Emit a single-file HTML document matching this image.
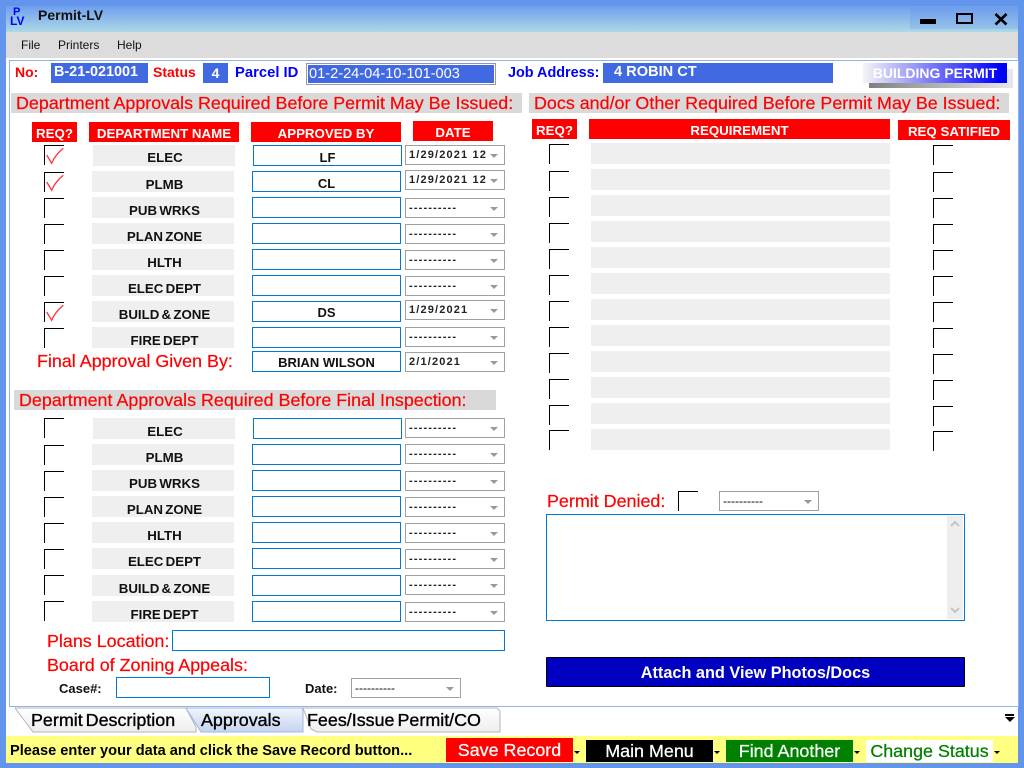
<!DOCTYPE html>
<html><head><meta charset="utf-8"><title>Permit-LV</title>
<style>
html,body{margin:0;padding:0;width:1024px;height:768px;overflow:hidden;background:#6495ed;font-family:"Liberation Sans",sans-serif}
div,svg{position:absolute;box-sizing:border-box}
.t{white-space:nowrap}
.h{background:#f00;color:#fff;font-weight:bold;font-size:13.3px;text-align:center;line-height:23px;height:20px;white-space:nowrap}
.s{background:#d9d9d9;color:#f00;font-size:17.9px;line-height:20px;height:20px;white-space:nowrap;-webkit-text-stroke:.2px #f00}
.c{width:20px;height:20px;border-top:1px solid #000;border-left:1px solid #000}
.l{width:142px;height:21px;background:#efefef;text-align:center;font-weight:bold;font-size:13.3px;word-spacing:-1.5px;line-height:27px;padding-left:3px;color:#111;white-space:nowrap}
.i{width:149px;height:21px;border:1px solid #0078d7;background:#fff;text-align:center;font-weight:bold;font-size:13px;line-height:21px;color:#111}
.d{width:100px;height:20px;border:1px solid #a0a0a0;background:#fff;font-size:11px;font-weight:bold;letter-spacing:1.15px;line-height:19px;padding-left:3px;color:#222;white-space:nowrap}
.d:after{content:"";position:absolute;right:6px;top:8px;border-left:4px solid transparent;border-right:4px solid transparent;border-top:4px solid #999}
.r{background:#efefef;left:591px;width:299px;height:21px}
.red{color:#f00;font-size:17.9px;white-space:nowrap;-webkit-text-stroke:.2px #f00}
.blu{color:#00f;font-weight:bold;font-size:14.6px;white-space:nowrap}
.b{background:#4169e1;color:#fff;font-weight:bold}
.bt{height:24px;width:127px;text-align:center;font-size:17.9px;color:#fff;line-height:25px;white-space:nowrap;-webkit-text-stroke:.25px currentColor}
.a{width:0;height:0;border-left:3px solid transparent;border-right:3px solid transparent;border-top:3px solid #000;top:751px}
.tb{white-space:nowrap;font-size:17.9px;word-spacing:-2px;color:#000;-webkit-text-stroke:.35px #000;top:710px}
</style></head><body>

<div style="left:6px;top:6px;width:1012px;height:26px;background:linear-gradient(#6f9fee,#add8e6)"></div>
<div style="left:910px;top:7px;width:108px;height:22px;background:rgba(100,149,237,.25)"></div>
<div class="t" style="left:13px;top:7px;color:#00f;font-weight:bold;font-size:11px;line-height:10px">P</div>
<div class="t" style="left:10px;top:16px;color:#00f;font-weight:bold;font-size:12px;line-height:11px">LV</div>
<div class="t" style="left:38px;top:7px;font-weight:bold;font-size:14px;color:#111">Permit-LV</div>
<div style="left:920px;top:19px;width:16px;height:5px;background:#000"></div>
<div style="left:956px;top:13px;width:17px;height:11px;border:2px solid #000"></div>
<svg style="left:994px;top:12px" width="14" height="14"><path d="M1.5 2 L12.5 12.5 M12.5 2 L1.5 12.5" stroke="#000" stroke-width="2.6" fill="none"/></svg>

<div style="left:6px;top:32px;width:1012px;height:26px;background:#dcdcdc"></div>
<div class="t" style="left:21px;top:38px;font-size:12px;color:#111">File</div>
<div class="t" style="left:58px;top:38px;font-size:12px;color:#111">Printers</div>
<div class="t" style="left:117px;top:38px;font-size:12px;color:#111">Help</div>

<div style="left:6px;top:58px;width:1012px;height:678px;background:#fff"></div>
<div style="left:9px;top:60px;width:1010px;height:647px;border:1px solid #8fb3ec;background:#fff"></div>

<div class="t" style="left:15px;top:64px;color:#f00;font-weight:bold;font-size:14px">No:</div>
<div class="b t" style="left:51px;top:63px;width:97px;height:20px;font-size:14.4px;line-height:18px;padding-left:3px">B-21-021001</div>
<div class="t" style="left:153px;top:64px;color:#f00;font-weight:bold;font-size:14px">Status</div>
<div class="b" style="left:203px;top:63px;width:25px;height:20px;font-size:14px;line-height:20px;text-align:center">4</div>
<div class="blu" style="left:235px;top:65px;font-size:14.8px">Parcel ID</div>
<div class="t" style="left:306px;top:63px;width:190px;height:22px;border:1px solid #999;background:#4169e1;background-clip:padding-box;box-shadow:inset 0 0 0 1px #fff;color:#fff;font-size:14.6px;line-height:21px;padding-left:2px">01-2-24-04-10-101-003</div>
<div class="blu" style="left:508px;top:65px;font-size:14.4px">Job Address:</div>
<div class="b t" style="left:603px;top:63px;width:230px;height:20px;font-size:14.6px;line-height:18px;padding-left:11px">4 ROBIN CT</div>
<div style="left:869px;top:69px;width:144px;height:19px;background:linear-gradient(90deg,#808080,#e8e8e8)"></div>
<div class="t" style="left:863px;top:63px;width:144px;height:20px;background:linear-gradient(90deg,#f4f4f4,#00f 95%);color:#fff;font-weight:bold;font-size:14px;line-height:20px;text-align:center">BUILDING PERMIT</div>

<div class="s" style="left:11px;top:93px;width:511px;padding-left:5px">Department Approvals Required Before Permit May Be Issued:</div>
<div class="s" style="left:529px;top:93px;width:480px;padding-left:5px">Docs and/or Other Required Before Permit May Be Issued:</div>

<div class="h" style="left:32px;top:122px;width:45px">REQ?</div>
<div class="h" style="left:89px;top:122px;width:150px">DEPARTMENT NAME</div>
<div class="h" style="left:251px;top:122px;width:150px">APPROVED BY</div>
<div class="h" style="left:413px;top:121px;width:80px">DATE</div>
<div class="h" style="left:532px;top:119px;width:45px">REQ?</div>
<div class="h" style="left:589px;top:119px;width:301px">REQUIREMENT</div>
<div class="h" style="left:898px;top:120px;width:112px">REQ SATIFIED</div>

<!-- approvals checkboxes -->
<div class="c" style="left:44px;top:145px"></div>
<div class="c" style="left:44px;top:172px"></div>
<div class="c" style="left:44px;top:198px"></div>
<div class="c" style="left:44px;top:224px"></div>
<div class="c" style="left:44px;top:250px"></div>
<div class="c" style="left:44px;top:276px"></div>
<div class="c" style="left:44px;top:302px"></div>
<div class="c" style="left:44px;top:328px"></div>
<svg style="left:44px;top:145px" width="22" height="22"><path d="M2.7 10 L7.7 18.3 Q11 10 19.3 3.3" stroke="#f33" stroke-width="1.3" fill="none"/></svg>
<svg style="left:44px;top:172px" width="22" height="22"><path d="M2.7 10 L7.7 18.3 Q11 10 19.3 3.3" stroke="#f33" stroke-width="1.3" fill="none"/></svg>
<svg style="left:44px;top:302px" width="22" height="22"><path d="M2.7 10 L7.7 18.3 Q11 10 19.3 3.3" stroke="#f33" stroke-width="1.3" fill="none"/></svg>

<div class="l" style="left:93px;top:145px;line-height:25px;padding-left:2px">ELEC</div>
<div class="l" style="left:92px;top:171px">PLMB</div>
<div class="l" style="left:92px;top:197px">PUB WRKS</div>
<div class="l" style="left:92px;top:223px">PLAN ZONE</div>
<div class="l" style="left:92px;top:249px">HLTH</div>
<div class="l" style="left:92px;top:275px">ELEC DEPT</div>
<div class="l" style="left:92px;top:301px">BUILD &amp; ZONE</div>
<div class="l" style="left:92px;top:327px">FIRE DEPT</div>

<div class="i" style="left:253px;top:145px;line-height:23px">LF</div>
<div class="i" style="left:252px;top:171px;line-height:23px">CL</div>
<div class="i" style="left:252px;top:197px"></div>
<div class="i" style="left:252px;top:223px"></div>
<div class="i" style="left:252px;top:249px"></div>
<div class="i" style="left:252px;top:275px"></div>
<div class="i" style="left:252px;top:301px">DS</div>
<div class="i" style="left:252px;top:327px"></div>
<div class="i" style="left:252px;top:351px">BRIAN WILSON</div>

<div class="d" style="left:405px;top:145px">1/29/2021 12</div>
<div class="d" style="left:405px;top:170px">1/29/2021 12</div>
<div class="d" style="left:405px;top:198px">----------</div>
<div class="d" style="left:405px;top:224px">----------</div>
<div class="d" style="left:405px;top:250px">----------</div>
<div class="d" style="left:405px;top:276px">----------</div>
<div class="d" style="left:405px;top:300px">1/29/2021</div>
<div class="d" style="left:405px;top:327px">----------</div>
<div class="d" style="left:405px;top:352px">2/1/2021</div>

<div class="red" style="left:37px;top:351px">Final Approval Given By:</div>

<div class="s" style="left:14px;top:390px;width:482px;padding-left:5px">Department Approvals Required Before Final Inspection:</div>

<div class="c" style="left:44px;top:418px"></div>
<div class="c" style="left:44px;top:445px"></div>
<div class="c" style="left:44px;top:471px"></div>
<div class="c" style="left:44px;top:497px"></div>
<div class="c" style="left:44px;top:523px"></div>
<div class="c" style="left:44px;top:549px"></div>
<div class="c" style="left:44px;top:575px"></div>
<div class="c" style="left:44px;top:601px"></div>

<div class="l" style="left:93px;top:418px;padding-left:2px">ELEC</div>
<div class="l" style="left:92px;top:444px">PLMB</div>
<div class="l" style="left:92px;top:470px">PUB WRKS</div>
<div class="l" style="left:92px;top:496px">PLAN ZONE</div>
<div class="l" style="left:92px;top:522px">HLTH</div>
<div class="l" style="left:92px;top:548px">ELEC DEPT</div>
<div class="l" style="left:92px;top:575px">BUILD &amp; ZONE</div>
<div class="l" style="left:92px;top:601px">FIRE DEPT</div>

<div class="i" style="left:253px;top:418px"></div>
<div class="i" style="left:252px;top:444px"></div>
<div class="i" style="left:252px;top:470px"></div>
<div class="i" style="left:252px;top:496px"></div>
<div class="i" style="left:252px;top:522px"></div>
<div class="i" style="left:252px;top:548px"></div>
<div class="i" style="left:252px;top:575px"></div>
<div class="i" style="left:252px;top:601px"></div>

<div class="d" style="left:405px;top:418px">----------</div>
<div class="d" style="left:405px;top:444px">----------</div>
<div class="d" style="left:405px;top:471px">----------</div>
<div class="d" style="left:405px;top:497px">----------</div>
<div class="d" style="left:405px;top:523px">----------</div>
<div class="d" style="left:405px;top:549px">----------</div>
<div class="d" style="left:405px;top:575px">----------</div>
<div class="d" style="left:405px;top:602px">----------</div>

<div class="red" style="left:47px;top:631px">Plans Location:</div>
<div class="i" style="left:172px;top:630px;width:333px"></div>
<div class="red" style="left:47px;top:655px">Board of Zoning Appeals:</div>
<div class="t" style="left:59px;top:681px;font-weight:bold;font-size:13px;color:#111">Case#:</div>
<div class="i" style="left:116px;top:677px;width:154px"></div>
<div class="t" style="left:305px;top:681px;font-weight:bold;font-size:13px;color:#111">Date:</div>
<div class="d" style="left:351px;top:678px;width:110px;font-weight:normal;letter-spacing:0;font-size:12px;line-height:18px;color:#000">----------</div>

<!-- right column -->
<div class="c" style="left:549px;top:144px"></div>
<div class="c" style="left:549px;top:171px"></div>
<div class="c" style="left:549px;top:197px"></div>
<div class="c" style="left:549px;top:223px"></div>
<div class="c" style="left:549px;top:249px"></div>
<div class="c" style="left:549px;top:275px"></div>
<div class="c" style="left:549px;top:301px"></div>
<div class="c" style="left:549px;top:327px"></div>
<div class="c" style="left:549px;top:353px"></div>
<div class="c" style="left:549px;top:379px"></div>
<div class="c" style="left:549px;top:405px"></div>
<div class="c" style="left:549px;top:430px"></div>

<div class="r" style="top:143px"></div>
<div class="r" style="top:169px"></div>
<div class="r" style="top:195px"></div>
<div class="r" style="top:221px"></div>
<div class="r" style="top:247px"></div>
<div class="r" style="top:273px"></div>
<div class="r" style="top:299px"></div>
<div class="r" style="top:325px"></div>
<div class="r" style="top:351px"></div>
<div class="r" style="top:377px"></div>
<div class="r" style="top:403px"></div>
<div class="r" style="top:429px"></div>

<div class="c" style="left:933px;top:145px"></div>
<div class="c" style="left:933px;top:172px"></div>
<div class="c" style="left:933px;top:198px"></div>
<div class="c" style="left:933px;top:224px"></div>
<div class="c" style="left:933px;top:250px"></div>
<div class="c" style="left:933px;top:276px"></div>
<div class="c" style="left:933px;top:302px"></div>
<div class="c" style="left:933px;top:328px"></div>
<div class="c" style="left:933px;top:354px"></div>
<div class="c" style="left:933px;top:380px"></div>
<div class="c" style="left:933px;top:406px"></div>
<div class="c" style="left:933px;top:431px"></div>

<div class="red" style="left:547px;top:491px">Permit Denied:</div>
<div class="c" style="left:678px;top:491px"></div>
<div class="d" style="left:719px;top:491px;font-weight:normal;letter-spacing:0;font-size:12px;line-height:18px;color:#000">----------</div>
<div style="left:546px;top:514px;width:419px;height:107px;border:1px solid #0078d7;background:#fff"></div>
<div style="left:947px;top:516px;width:16px;height:103px;background:#eee"></div>
<svg style="left:947px;top:516px" width="16" height="103"><path d="M4 10 L8 6 L12 10 M4 92 L8 96 L12 92" stroke="#c4c4c4" stroke-width="2" fill="none"/></svg>

<div class="t" style="left:546px;top:657px;width:419px;height:30px;background:#0000c0;border:1px solid #000;border-radius:1px;color:#fff;font-weight:bold;font-size:16.3px;line-height:30px;text-align:center">Attach and View Photos/Docs</div>

<!-- tabs -->
<svg style="left:14px;top:707px" width="490" height="30">
<defs><linearGradient id="g" x1="0" y1="0" x2="0" y2="1"><stop offset="0" stop-color="#f2f5fc"/><stop offset="1" stop-color="#c5d4f0"/></linearGradient>
<linearGradient id="w" x1="0" y1="0" x2="0" y2="1"><stop offset="0" stop-color="#fff"/><stop offset="1" stop-color="#eee"/></linearGradient></defs>
<path d="M1 1 L172 1 L182 20 L182 25 L19 25 Z" fill="url(#w)" stroke="#b5b5b5"/>
<path d="M172 1 L288 1 L289 3 L289 25 L187 25 Z" fill="url(#g)" stroke="#9db8e6"/>
<path d="M289 1 L483 1 L486 4 L486 25 L303 25 L297 22 Z" fill="url(#w)" stroke="#b5b5b5"/>
</svg>
<div class="tb" style="left:31px">Permit Description</div>
<div class="tb" style="left:201px">Approvals</div>
<div class="tb" style="left:307px">Fees/Issue Permit/CO</div>
<div style="left:1005px;top:714px;width:9px;height:2px;background:#000"></div>
<div style="left:1005px;top:717px;width:0;height:0;border-left:5px solid transparent;border-right:5px solid transparent;border-top:5px solid #000"></div>

<!-- status bar -->
<div style="left:6px;top:736px;width:1012px;height:27px;background:#ffff80"></div>
<div class="t" style="left:10px;top:743px;font-weight:bold;font-size:14.6px;color:#000">Please enter your data and click the Save Record button...</div>
<div class="bt" style="left:446px;top:738px;background:#f00">Save Record</div>
<div class="a" style="left:574px"></div>
<div class="bt" style="left:586px;top:740px;height:22px;background:#000;line-height:23px">Main Menu</div>
<div class="a" style="left:714px"></div>
<div class="bt" style="left:726px;top:740px;height:22px;background:#008000;line-height:23px">Find Another</div>
<div class="a" style="left:854px"></div>
<div class="bt" style="left:866px;top:740px;height:22px;background:#fff;color:#008000;line-height:23px">Change Status</div>
<div class="a" style="left:994px"></div>
</body></html>
